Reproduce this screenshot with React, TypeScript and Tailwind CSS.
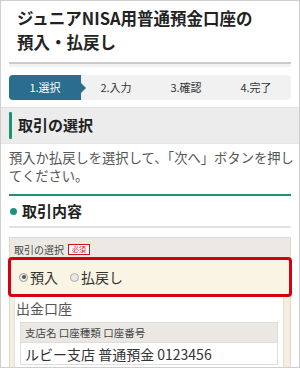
const font = { fontFamily: '"Noto Sans CJK JP", "Noto Sans", sans-serif' };

const steps = ['1.選択', '2.入力', '3.確認', '4.完了'];

export default function App() {
  return (
    <div
      style={font}
      className="w-[300px] h-[368px] overflow-hidden bg-white border border-[#cfcfcf] text-[#333]"
    >
      {/* Title */}
      <div className="mx-[8px] pt-[5px] pl-[8px] pb-[8px] border-b-2 border-[#cccccc]">
        <h1 className="text-[16.5px] leading-[24px] font-bold text-[#222] whitespace-nowrap">
          ジュニアNISA用普通預金口座の
          <br />
          預入・払戻し
        </h1>
      </div>
      <div className="mx-[8px] h-[3px] bg-[#f3f3f3]" />

      {/* Steps */}
      <div className="mx-[8px] mt-[8px] h-[25px] flex items-center bg-[#f1f1f1] rounded-[4px] text-[11px]">
        {steps.map((s, i) =>
          i === 0 ? (
            <div
              key={s}
              className="relative w-[72px] h-full flex items-center justify-center bg-[#2a6d8e] text-white rounded-l-[4px]"
            >
              {s}
              <span className="absolute right-[-5px] top-[8px] w-0 h-0 border-y-[5px] border-y-transparent border-l-[5px] border-l-[#2a6d8e]" />
            </div>
          ) : (
            <div key={s} className="flex-1 text-center text-[#333]">
              {s}
            </div>
          )
        )}
      </div>

      {/* Section header */}
      <div className="mt-[7px] h-[37px] flex items-center bg-[#ececec] border-t border-[#dcdcdc] border-b border-b-[#e0e0e0] border-dotted pl-[8px]">
        <span className="w-[3px] h-[27px] bg-[#1b9476] rounded-[1px] mr-[6px]" />
        <span className="text-[15px] font-bold text-[#222]">取引の選択</span>
      </div>

      <p className="px-[8px] pt-[5px] text-[13.3px] leading-[18px] text-[#555] whitespace-nowrap">
        預入か払戻しを選択して、「次へ」ボタンを押し
        <br />
        てください。
      </p>

      <div className="mx-[8px] mt-[9px] h-[2px] bg-[#1b9476]" />

      {/* Sub heading */}
      <div className="mx-[8px] h-[30px] flex items-center">
        <span className="w-[7px] h-[7px] rounded-full bg-[#1b9476] mr-[5px] ml-[1px]" />
        <span className="text-[15px] font-bold text-[#222]">取引内容</span>
      </div>
      <div className="mx-[8px] h-[2px] bg-[#e2e2e2]" />

      {/* Form box */}
      <div className="mx-[8px] mt-[9px] bg-[#f4eedf] border border-[#dcd8d2]">
        <div className="bg-[#ece9e4] h-[19px] flex items-center pl-[4px] pt-[3px] gap-[4px]">
          <span className="text-[10px] text-[#444]">取引の選択</span>
          <span className="text-[7px] leading-[9px] px-[3px] text-[#d0121b] border border-[#d0121b] bg-white">
            必須
          </span>
        </div>
        <div className="-mx-[2px] h-[40px] flex items-center gap-[12px] pl-[8px] bg-[#f9f4e3] border-[3px] border-[#d5000f] rounded-[4px] text-[14px] text-[#333]">
          <label className="flex items-center gap-[2px]">
            <span className="w-[9px] h-[9px] rounded-full border border-[#999] bg-[#eee] flex items-center justify-center">
              <span className="w-[4px] h-[4px] rounded-full bg-[#555]" />
            </span>
            預入
          </label>
          <label className="flex items-center gap-[2px]">
            <span className="w-[9px] h-[9px] rounded-full border border-[#aaa] bg-[#e8e8e8]" />
            払戻し
          </label>
        </div>
        <div className="ml-[4px] mr-[6px] bg-white border-x border-[#e6e1d6] px-[5px] pb-[20px]">
          <div className="pt-[1px] text-[14px] leading-[20px] text-[#555] -ml-[4px]">出金口座</div>
          <div className="mt-[4px] border border-[#ddd]">
            <div className="h-[20px] bg-[#ebe8e4] flex items-center pl-[4px] text-[10.5px] text-[#444] border-b border-[#ddd]">
              支店名 口座種類 口座番号
            </div>
            <div className="pl-[4px] pt-[1px] text-[14px] leading-[20px] text-[#333]">
              ルビー支店 普通預金 0123456
            </div>
          </div>
        </div>
      </div>
    </div>
  );
}
